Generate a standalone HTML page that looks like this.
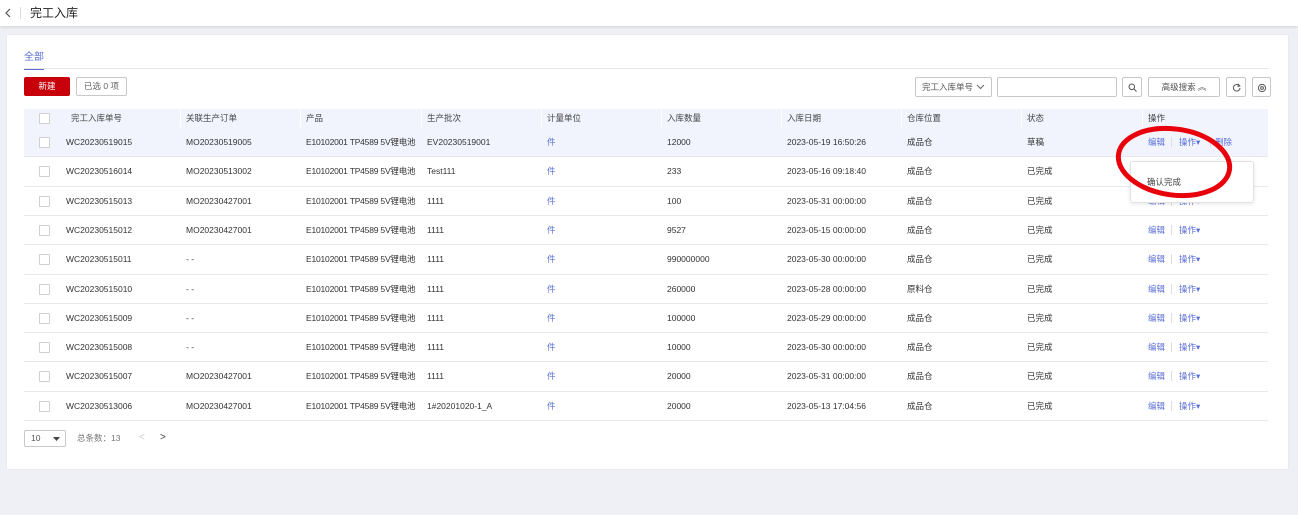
<!DOCTYPE html>
<html><head><meta charset="utf-8"><style>
*{margin:0;padding:0;box-sizing:border-box}
body{width:1298px;height:515px;background:#eef0f5;font-family:"Liberation Sans","Noto Sans CJK SC",sans-serif;font-size:8.5px;color:#333;position:relative;overflow:hidden}
.a{position:absolute;white-space:nowrap;line-height:12px}
.hdr{position:absolute;left:0;top:0;width:1298px;height:26px;background:#fff;box-shadow:0 1px 3px rgba(0,0,0,.12)}
.card{position:absolute;left:7px;top:35px;width:1281px;height:434px;background:#fff;box-shadow:0 0 2px rgba(0,0,0,.08)}
.btn{position:absolute;border:1px solid #c8c8c8;border-radius:2px;background:#fff;height:19px}
.row{position:absolute;left:24px;width:1244px;height:29.4px;border-bottom:1px solid #e8e8e8}
.cb{position:absolute;left:15px;width:11px;height:11px;border:1px solid #d0d0d0;background:#fff;border-radius:1px}
.blue{color:#5b6fd6}
</style></head><body>
<div class="hdr">
<svg class="a" style="left:4px;top:8px" width="8" height="10"><path d="M6 1L2 5L6 9" stroke="#555" stroke-width="1.2" fill="none"/></svg>
<div class="a" style="left:20px;top:7px;width:1px;height:12px;background:#ddd"></div>
<div class="a" style="left:30px;top:6px;font-size:12px;line-height:14px;color:#222">完工入库</div>
</div>
<div class="card"></div>
<div class="a" style="left:24px;top:52px;font-size:10px;color:#5b6fd6">全部</div>
<div class="a" style="left:24px;top:68px;width:20px;height:2px;background:#5b6fd6"></div>
<div class="a" style="left:24px;top:68px;width:1244px;height:1px;background:#e6e6e6"></div>
<div class="a" style="left:24px;top:77px;width:46px;height:19px;background:#c7000b;border-radius:2px;color:#fff;text-align:center;line-height:19px">新建</div>
<div class="btn" style="left:76px;top:77px;width:51px;text-align:center;line-height:17px;color:#666">已选 0 项</div>
<div class="btn" style="left:915px;top:77px;width:77px;height:20px;line-height:18px;padding-left:6px;color:#555">完工入库单号<svg style="position:absolute;right:6px;top:6px" width="9" height="6"><path d="M1 1L4.5 4.5L8 1" stroke="#666" fill="none"/></svg></div>
<div class="btn" style="left:997px;top:77px;width:120px;height:20px"></div>
<div class="btn" style="left:1122px;top:77px;width:20px;height:20px"><svg style="position:absolute;left:5px;top:5px" width="9" height="9"><circle cx="3.8" cy="3.8" r="2.8" stroke="#555" fill="none"/><path d="M6 6L8.5 8.5" stroke="#555"/></svg></div>
<div class="btn" style="left:1148px;top:77px;width:72px;height:20px;text-align:center;line-height:18px;color:#555">高级搜索 ︽</div>
<div class="btn" style="left:1226px;top:77px;width:20px;height:20px"><svg style="position:absolute;left:5px;top:5px" width="9" height="9"><path d="M7.5 3A3.3 3.3 0 1 0 8 5" stroke="#555" fill="none"/><path d="M6 1L7.8 3L5.5 3.5" stroke="#555" fill="none"/></svg></div>
<div class="btn" style="left:1252px;top:77px;width:19px;height:20px"><svg style="position:absolute;left:4px;top:5px" width="10" height="10"><circle cx="5" cy="5" r="3.6" stroke="#555" fill="none"/><circle cx="5" cy="5" r="1.4" stroke="#555" fill="none"/></svg></div>
<div class="a" style="left:24px;top:109px;width:1244px;height:19px;background:#f1f4fd"></div>
<div class="cb" style="left:39px;top:113px"></div>
<div id="hd"></div>
<div id="rows"></div>
<div class="a" style="left:1130px;top:161px;width:124px;height:42px;background:#fff;border:1px solid #e2e2e2;border-radius:3px;box-shadow:0 1px 4px rgba(0,0,0,.1)"></div>
<div class="a" style="left:1147px;top:176px;color:#444">确认完成</div>
<svg class="a" style="left:1110px;top:122px" width="130" height="82"><ellipse cx="64" cy="40" rx="56" ry="33" transform="rotate(8 64 40)" stroke="#e8000b" stroke-width="5" fill="none"/></svg>
<div class="btn" style="left:24px;top:430px;width:42px;height:17px;line-height:15px;padding-left:6px;color:#555">10<svg style="position:absolute;right:5px;top:6px" width="7" height="5"><path d="M0 0H7L3.5 4Z" fill="#444"/></svg></div>
<div class="a" style="left:77px;top:432px;color:#777">总条数：13</div>
<div class="a" style="left:139px;top:432px;color:#ccc;font-size:10px">&lt;</div>
<div class="a" style="left:160px;top:432px;color:#444;font-size:10px">&gt;</div>
<script>
var X=[66,186,306,427,547,667,787,907,1027,1148];
var H=["完工入库单号","关联生产订单","产品","生产批次","计量单位","入库数量","入库日期","仓库位置","状态","操作"];
var s="";
H.forEach(function(h,i){s+='<div class="a" style="left:'+(i==0?71:X[i])+'px;top:112px;color:#444">'+h+'</div>';if(i>0)s+='<div class="a" style="left:'+(X[i]-6)+'px;top:110px;width:1px;height:17px;background:#fff"></div>';});
document.getElementById("hd").outerHTML=s;
var R=[["WC20230519015","MO20230519005","EV20230519001","12000","2023-05-19 16:50:26","成品仓","草稿"],
["WC20230516014","MO20230513002","Test111","233","2023-05-16 09:18:40","成品仓","已完成"],
["WC20230515013","MO20230427001","1111","100","2023-05-31 00:00:00","成品仓","已完成"],
["WC20230515012","MO20230427001","1111","9527","2023-05-15 00:00:00","成品仓","已完成"],
["WC20230515011","- -","1111","990000000","2023-05-30 00:00:00","成品仓","已完成"],
["WC20230515010","- -","1111","260000","2023-05-28 00:00:00","原料仓","已完成"],
["WC20230515009","- -","1111","100000","2023-05-29 00:00:00","成品仓","已完成"],
["WC20230515008","- -","1111","10000","2023-05-30 00:00:00","成品仓","已完成"],
["WC20230515007","MO20230427001","1111","20000","2023-05-31 00:00:00","成品仓","已完成"],
["WC20230513006","MO20230427001","1#20201020-1_A","20000","2023-05-13 17:04:56","成品仓","已完成"]];
s="";
R.forEach(function(r,k){var t=128+k*29.3;
s+='<div class="row" style="top:'+t+'px;'+(k==0?'background:#f1f4fd':'')+'"></div>';
s+='<div class="cb" style="left:39px;top:'+(t+9)+'px"></div>';
var v=[r[0],r[1],"E10102001 TP4589 5V锂电池",r[2],"件",r[3],r[4],r[5],r[6]];
v.forEach(function(x,i){s+='<div class="a'+(i==4?' blue':'')+'" style="left:'+X[i]+'px;top:'+(t+8)+'px;'+(i==2?'letter-spacing:-0.2px;':'')+'">'+x+'</div>';});
s+='<div class="a blue" style="left:1148px;top:'+(t+8)+'px">编辑</div><div class="a" style="left:1171px;top:'+(t+9)+'px;width:1px;height:10px;background:#ddd"></div><div class="a blue" style="left:1179px;top:'+(t+8)+'px">操作▾</div>';
if(k==0)s+='<div class="a" style="left:1210px;top:'+(t+9)+'px;width:1px;height:10px;background:#ddd"></div><div class="a blue" style="left:1215px;top:'+(t+8)+'px">删除</div>';
});
document.getElementById("rows").outerHTML=s;
</script>
</body></html>
